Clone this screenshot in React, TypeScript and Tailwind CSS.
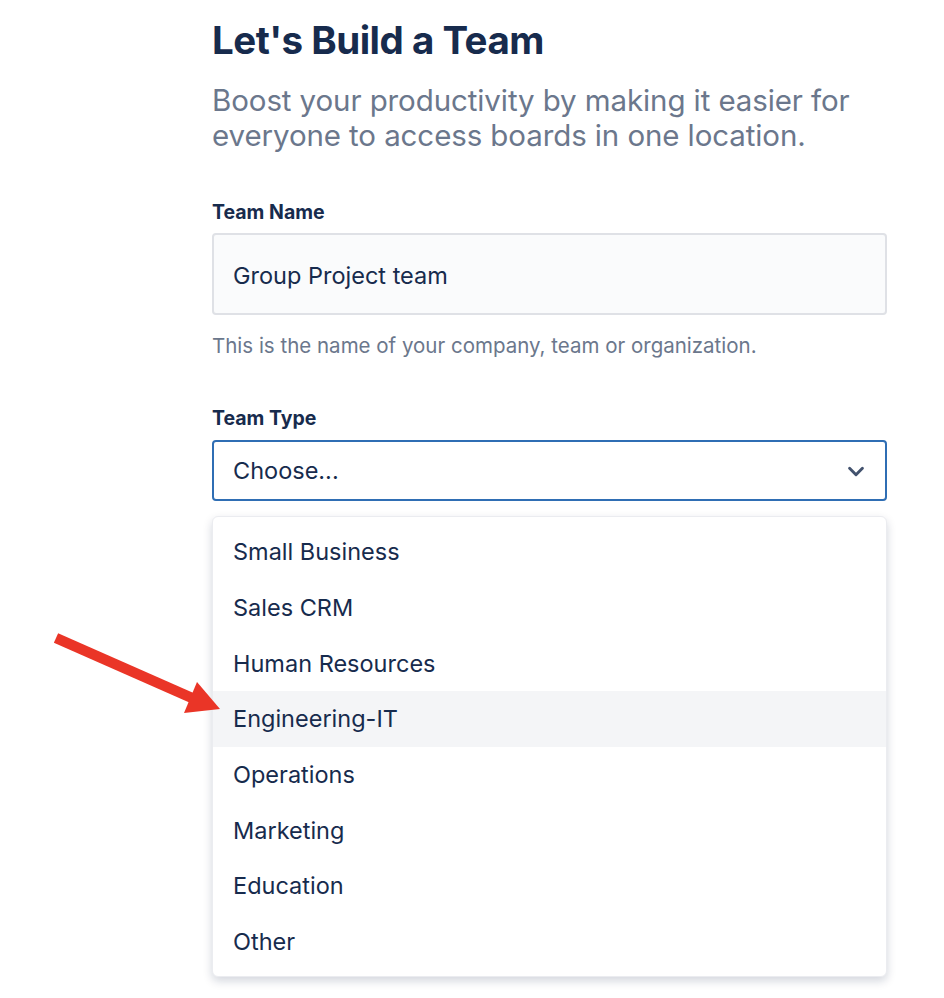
import React from 'react';

const options = [
  'Small Business',
  'Sales CRM',
  'Human Resources',
  'Engineering-IT',
  'Operations',
  'Marketing',
  'Education',
  'Other',
];

const App: React.FC = () => {
  return (
    <div className="relative min-h-[998px] w-[944px] bg-white font-['Inter','Liberation_Sans',sans-serif] text-[#172B4D]">
      {/* pointer arrow */}
      <svg
        className="absolute left-[50px] top-[628px]"
        width="175"
        height="95"
        viewBox="0 0 175 95"
      >
        <line x1="6" y1="10" x2="142" y2="70" stroke="#EA3527" strokeWidth="10.5" strokeLinecap="butt" />
        <polygon points="170,81 134,85 147,54" fill="#EA3527" />
      </svg>

      <div className="ml-[212px] w-[675px] pt-[16px]">
        <h1 className="text-[38.5px] font-bold leading-[48px] tracking-[-0.5px]">Let's Build a Team</h1>
        <p className="mt-[19px] text-[29.5px] leading-[35px] tracking-[-0.1px] text-[#6B778C]">
          Boost your productivity by making it easier for everyone to access boards in one location.
        </p>

        <label className="mt-[47px] block text-[19.5px] font-bold leading-[24px]">Team Name</label>
        <div className="mt-[9px] flex h-[82px] items-center rounded-[4px] border-2 border-[#DFE1E6] bg-[#FAFBFC] px-[19px] pt-[4px] text-[23.5px]">
          Group Project team
        </div>
        <p className="mt-[19px] text-[20.5px] leading-[24px] text-[#6B778C]">
          This is the name of your company, team or organization.
        </p>

        <label className="mt-[48px] block text-[19.5px] font-bold leading-[24px]">Team Type</label>
        <div className="mt-[10px] flex h-[61px] items-center justify-between rounded-[4px] border-2 border-[#2F6EB4] bg-white pl-[19px] pr-[18px] pt-[1px] text-[23.5px]">
          <span>Choose...</span>
          <svg width="22" height="22" viewBox="0 0 24 24" fill="none" stroke="#42526E" strokeWidth="3.2" strokeLinecap="round" strokeLinejoin="round">
            <path d="M5 9l7 7 7-7" />
          </svg>
        </div>

        <ul className="mt-[15px] rounded-[6px] border border-[#EBECF0] bg-white pt-[7px] pb-[6px] shadow-[0_4px_10px_rgba(9,30,66,0.18)]">
          {options.map((o) => (
            <li
              key={o}
              className={`flex h-[55.7px] items-center px-[20px] text-[23.5px] ${o === 'Engineering-IT' ? 'bg-[#F4F5F7]' : ''}`}
            >
              {o}
            </li>
          ))}
        </ul>
      </div>
    </div>
  );
};

export default App;
